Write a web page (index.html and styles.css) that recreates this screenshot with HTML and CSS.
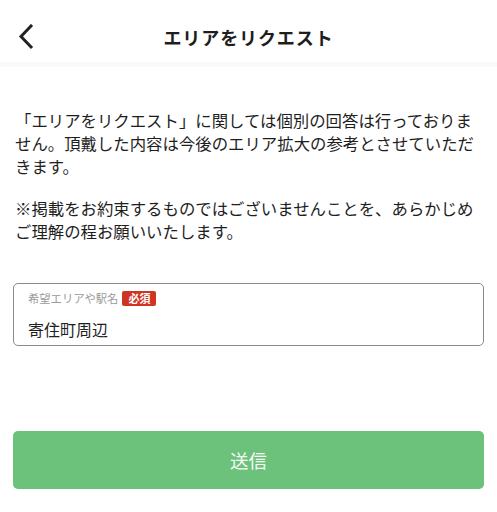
FILE: index.html
```html
<!DOCTYPE html>
<html lang="ja">
<head>
<meta charset="utf-8">
<title>エリアをリクエスト</title>
<link rel="stylesheet" href="styles.css">
</head>
<body>
<header class="header">
  <button class="back" aria-label="戻る">
    <svg width="16" height="26" viewBox="0 0 16 26"><path d="M13 2 L3 12.5 L13 23" fill="none" stroke="#222" stroke-width="3" stroke-linecap="square" stroke-linejoin="miter"/></svg>
  </button>
  <h1 class="title">エリアをリクエスト</h1>
</header>
<main class="content">
  <p class="note">「エリアをリクエスト」に関しては個別の回答は行っておりません。頂戴した内容は今後のエリア拡大の参考とさせていただきます。</p>
  <p class="note">※掲載をお約束するものではございませんことを、あらかじめご理解の程お願いいたします。</p>
  <div class="field">
    <div class="field-label"><span class="label-text">希望エリアや駅名</span><span class="badge">必須</span></div>
    <div class="field-value">寄住町周辺</div>
  </div>
  <button class="submit">送信</button>
</main>
</body>
</html>
```
FILE: styles.css
```css
html, body {
  margin: 0;
  padding: 0;
  background: #fff;
}
body {
  font-family: "Noto Sans CJK JP", "Noto Sans", sans-serif;
  color: #1e1e1e;
}
.header {
  position: relative;
  height: 50px;
  padding-top: 12px;
  display: flex;
  align-items: center;
  justify-content: center;
  border-bottom: 5px solid #f9f9f9;
}
.back {
  position: absolute;
  left: 18px;
  top: 24px;
  padding: 0;
  border: 0;
  background: none;
  width: 16px;
  height: 26px;
  display: block;
}
.back svg { display: block; }
.title {
  margin: 0;
  font-size: 18px;
  font-weight: 700;
  letter-spacing: 0.9px;
  line-height: 24px;
}
.content {
  padding: 42px 15px 0;
  display: flex;
  flex-direction: column;
}
.note {
  margin: 0 0 19px;
  font-size: 16.4px;
  line-height: 23px;
}
.field {
  margin: 21px -2px 0;
  height: 61px;
  border: 1px solid #8a8a8a;
  border-radius: 5px;
  padding: 0 14px;
  box-sizing: content-box;
}
.field-label {
  display: flex;
  align-items: center;
  gap: 4px;
  margin-top: 7px;
  height: 15px;
}
.label-text {
  font-size: 11.3px;
  color: #9a9a9a;
  line-height: 15px;
}
.badge {
  background: #cf3423;
  color: #fff;
  font-size: 11px;
  font-weight: 700;
  line-height: 15px;
  padding: 0 6px;
  border-radius: 2px;
}
.field-value {
  margin-top: 11px;
  font-size: 16px;
  line-height: 24px;
}
.submit {
  margin: 85px -2px 0;
  height: 58px;
  border: 0;
  border-radius: 5px;
  background: #6cc27a;
  color: #f4fbf4;
  font-family: "Noto Sans CJK JP", "Noto Sans", sans-serif;
  font-size: 18.5px;
  font-weight: 400;
}
```
